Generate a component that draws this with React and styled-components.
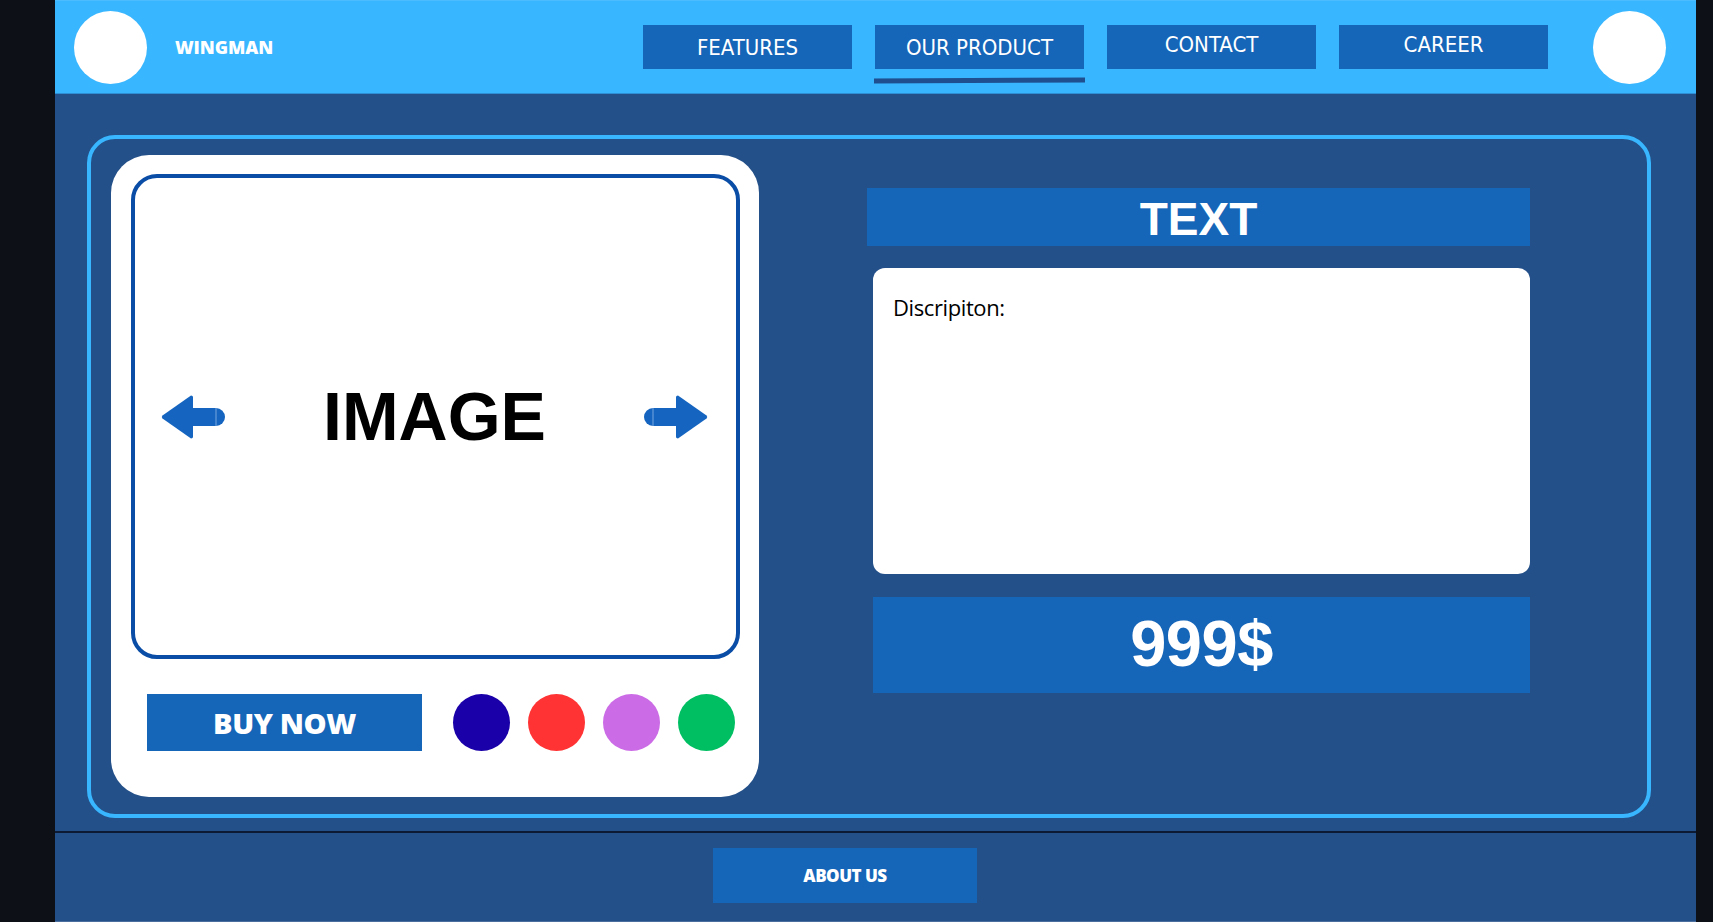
import React from 'react';
import styled, {createGlobalStyle} from 'styled-components';

const GlobalStyle = createGlobalStyle`
  html, body {
    margin: 0;
    padding: 0;
    background: #0d1117;
  }
  * {
    box-sizing: border-box;
  }
`;

const Page = styled.div`
  margin-left: 55px;
  width: 1641px;
  height: 922px;
  background: #245089;
  display: flex;
  flex-direction: column;
  border-bottom: 1px solid #4a6e9e;
`;

const Header = styled.header`
  height: 94px;
  flex-shrink: 0;
  background: #38b6ff;
  border-top: 1px solid #4cbcff;
  border-bottom: 1px solid #2f8fd6;
  display: flex;
  align-items: center;
  padding: 0 30px 0 19px;
`;

const Avatar = styled.div`
  width: 73px;
  height: 73px;
  border-radius: 50%;
  background: #fff;
  flex-shrink: 0;
`;

const Brand = styled.div`
  margin-left: 28px;
  color: #fff;
  font-family: "Open Sans", "Liberation Sans", sans-serif;
  font-weight: 800;
  font-size: 18px;
  letter-spacing: -0.1px;
`;

const Nav = styled.nav`
  margin-left: auto;
  margin-right: 45px;
  display: flex;
  gap: 23px;
`;

const NavItem = styled.div`
  position: relative;
  width: 209px;
  height: 44px;
  background: #1565b9;
  color: #fff;
  display: flex;
  justify-content: center;
  align-items: center;
  padding-bottom: ${p => (p.$lift ? 6 : 0)}px;
  font-family: "Liberation Sans Narrow", "DejaVu Sans Condensed", "Roboto", sans-serif;
  font-stretch: condensed;
  font-size: 22px;
`;

const Underline = styled.span`
  position: absolute;
  left: -1px;
  right: -1px;
  top: 53px;
  height: 5px;
  background: #1f4f8f;
  transform: rotate(-0.3deg);
`;

const Main = styled.main`
  flex: 1;
  padding: 41px 45px 13px 32px;
  border-bottom: 2px solid #0c1a33;
`;

const Panel = styled.section`
  height: 683px;
  border: 4px solid #38b6ff;
  border-radius: 28px;
  display: flex;
  padding: 16px 0 0 20px;
`;

const ProductCard = styled.div`
  width: 648px;
  height: 642px;
  background: #fff;
  border-radius: 38px;
  padding: 19px 19px 0 20px;
  display: flex;
  flex-direction: column;
`;

const ImageFrame = styled.div`
  height: 485px;
  border: 4px solid #0a4da6;
  border-radius: 26px;
  display: flex;
  align-items: center;
  justify-content: space-between;
  padding: 0 28px 0 26px;
`;

const ImageLabel = styled.div`
  font-family: "Liberation Sans", "Arial", sans-serif;
  font-weight: 700;
  font-size: 68px;
  color: #000;
  margin-top: -2px;
`;

const CardFooter = styled.div`
  display: flex;
  align-items: center;
  margin-top: 35px;
  padding-left: 16px;
`;

const BuyButton = styled.button`
  width: 275px;
  height: 57px;
  border: 0;
  background: #1565b9;
  color: #fff;
  font-family: "Open Sans", "Liberation Sans", sans-serif;
  font-weight: 800;
  font-size: 29px;
  letter-spacing: -0.4px;
  margin-right: 31px;
`;

const Swatches = styled.div`
  display: flex;
  gap: 18px;
`;

const Swatch = styled.span`
  width: 57px;
  height: 57px;
  border-radius: 50%;
  background: ${p => p.$color};
`;

const InfoColumn = styled.div`
  margin-left: 108px;
  margin-top: 33px;
  width: 663px;
  display: flex;
  flex-direction: column;
`;

const TitleBar = styled.div`
  height: 58px;
  background: #1565b9;
  color: #fff;
  display: flex;
  align-items: center;
  justify-content: center;
  padding-top: 3px;
  font-family: "Liberation Sans", "Arial", sans-serif;
  font-weight: 700;
  font-size: 46px;
`;

const Description = styled.div`
  margin: 22px 0 0 6px;
  height: 306px;
  background: #fff;
  border-radius: 12px;
  padding: 24px 20px;
  font-family: "Open Sans", "Liberation Sans", sans-serif;
  font-size: 22px;
  letter-spacing: -0.4px;
  color: #000;
`;

const PriceBar = styled.div`
  margin: 23px 0 0 6px;
  height: 96px;
  background: #1565b9;
  color: #fff;
  display: flex;
  align-items: center;
  justify-content: center;
  padding-bottom: 3px;
  font-family: "Liberation Sans", "Arial", sans-serif;
  font-weight: 700;
  font-size: 65px;
  letter-spacing: -0.5px;
`;

const Footer = styled.footer`
  height: 89px;
  flex-shrink: 0;
  padding: 15px 0 0 658px;
`;

const AboutButton = styled.button`
  width: 264px;
  height: 55px;
  border: 0;
  background: #1565b9;
  color: #fff;
  font-family: "Open Sans", "Liberation Sans", sans-serif;
  font-weight: 800;
  font-size: 17px;
  letter-spacing: -0.5px;
`;

const ArrowIcon = ({flip}) => (
    <svg width="64" height="48" viewBox="0 0 64 48"
         style={flip ? {transform: 'scaleX(-1)'} : undefined}>
        <path d="M30 2.5 L31.5 3 L32 4 L32 44 L31.5 45 L30 45.5 L1.5 25.5 Q0 24 1.5 22.5 Z" fill="#1565c0"/>
        <path d="M31 15 H55 A9 9 0 0 1 55 33 H31 Z" fill="#1565c0"/>
        <line x1="55" y1="15" x2="55" y2="33" stroke="#8fb6e6" strokeWidth="0.8"/>
    </svg>
);

const navLinks = [
    {label: 'FEATURES'},
    {label: 'OUR PRODUCT', active: true},
    {label: 'CONTACT', lift: true},
    {label: 'CAREER', lift: true},
];

const colors = ['#1a00a8', '#ff3333', '#cb6ce6', '#00bf63'];

export default function App() {
    return (
        <>
            <GlobalStyle/>
            <Page>
                <Header>
                    <Avatar/>
                    <Brand>WINGMAN</Brand>
                    <Nav>
                        {navLinks.map(link => (
                            <NavItem key={link.label} $lift={link.lift}>
                                {link.label}
                                {link.active && <Underline/>}
                            </NavItem>
                        ))}
                    </Nav>
                    <Avatar/>
                </Header>
                <Main>
                    <Panel>
                        <ProductCard>
                            <ImageFrame>
                                <ArrowIcon/>
                                <ImageLabel>IMAGE</ImageLabel>
                                <ArrowIcon flip/>
                            </ImageFrame>
                            <CardFooter>
                                <BuyButton>BUY NOW</BuyButton>
                                <Swatches>
                                    {colors.map(c => <Swatch key={c} $color={c}/>)}
                                </Swatches>
                            </CardFooter>
                        </ProductCard>
                        <InfoColumn>
                            <TitleBar>TEXT</TitleBar>
                            <Description>Discripiton:</Description>
                            <PriceBar>999$</PriceBar>
                        </InfoColumn>
                    </Panel>
                </Main>
                <Footer>
                    <AboutButton>ABOUT US</AboutButton>
                </Footer>
            </Page>
        </>
    );
}
